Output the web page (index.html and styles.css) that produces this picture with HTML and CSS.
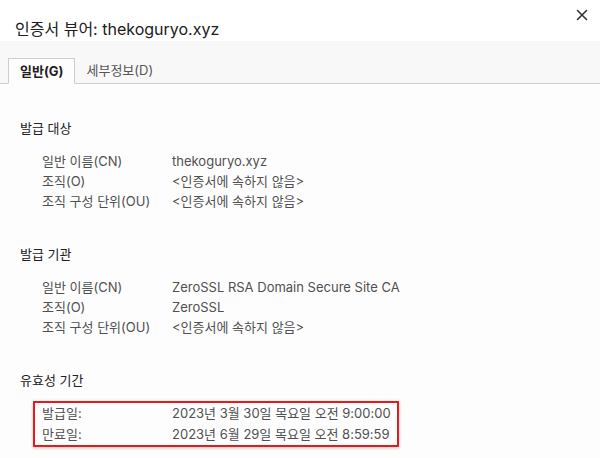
FILE: index.html
```html
<!DOCTYPE html>
<html lang="ko">
<head>
<meta charset="utf-8">
<link rel="stylesheet" href="styles.css">
</head>
<body>
<div class="dialog">
  <header class="titlebar">
    <h1 class="title">인증서 뷰어: thekoguryo.xyz</h1>
    <button class="close" aria-label="닫기">
      <svg width="12" height="12" viewBox="0 0 12 12"><path d="M1.5 1.5 L10.5 10.5 M10.5 1.5 L1.5 10.5" stroke="#333" stroke-width="1.6" stroke-linecap="round"/></svg>
    </button>
  </header>
  <nav class="tabs">
    <div class="tab active">일반(G)</div>
    <div class="tab">세부정보(D)</div>
  </nav>
  <main class="content">
    <section class="section">
      <h2 class="heading">발급 대상</h2>
      <dl class="rows">
        <dt>일반 이름(CN)</dt><dd>thekoguryo.xyz</dd>
        <dt>조직(O)</dt><dd>&lt;인증서에 속하지 않음&gt;</dd>
        <dt>조직 구성 단위(OU)</dt><dd>&lt;인증서에 속하지 않음&gt;</dd>
      </dl>
    </section>
    <section class="section">
      <h2 class="heading">발급 기관</h2>
      <dl class="rows">
        <dt>일반 이름(CN)</dt><dd>ZeroSSL RSA Domain Secure Site CA</dd>
        <dt>조직(O)</dt><dd>ZeroSSL</dd>
        <dt>조직 구성 단위(OU)</dt><dd>&lt;인증서에 속하지 않음&gt;</dd>
      </dl>
    </section>
    <section class="section">
      <h2 class="heading validity">유효성 기간</h2>
      <dl class="rows highlight">
        <dt>발급일:</dt><dd>2023년 3월 30일 목요일 오전 9:00:00</dd>
        <dt>만료일:</dt><dd>2023년 6월 29일 목요일 오전 8:59:59</dd>
      </dl>
    </section>
  </main>
</div>
</body>
</html>
```
FILE: styles.css
```css
html, body {
  margin: 0;
  padding: 0;
  background: #ffffff;
}
body {
  font-family: Inter, "Noto Sans CJK KR", sans-serif;
  color: #222;
  width: 600px;
  height: 458px;
  overflow: hidden;
}
.dialog {
  display: flex;
  flex-direction: column;
  height: 458px;
}
.titlebar {
  flex: 0 0 41px;
  display: flex;
  align-items: flex-start;
  justify-content: space-between;
  padding: 0 12px 0 15px;
  background: #fff;
  box-sizing: border-box;
}
.title {
  margin: 0;
  font-size: 16px;
  font-weight: 400;
  color: #202020;
  padding-top: 18px;
  line-height: 22px;
}
.close {
  border: 0;
  background: none;
  padding: 0;
  width: 12px;
  height: 12px;
  margin-top: 9px;
  display: flex;
}
.tabs {
  flex: 0 0 43px;
  background: #f8f8f8;
  border-bottom: 1px solid #cdcdcd;
  display: flex;
  align-items: flex-end;
  padding-left: 8px;
  box-sizing: border-box;
}
.tab {
  height: 26px;
  line-height: 25px;
  font-size: 13px;
  padding: 0 11px;
  color: #555;
  margin-bottom: -1px;
  box-sizing: border-box;
}
.tab.active {
  background: #fdfdfd;
  border: 1px solid #cdcdcd;
  border-bottom: 1px solid #fdfdfd;
  font-weight: 700;
  color: #202020;
  padding: 0 11px;
}
.content {
  flex: 1 1 auto;
  min-height: 0;
  overflow: hidden;
  background: #fdfdfd;
  padding: 26px 0 0 20px;
}
.section {
  margin-bottom: 25px;
}
.heading {
  margin: 0 0 5px 0;
  font-size: 13px;
  font-weight: 400;
  line-height: 36px;
  height: 36px;
  color: #202020;
}
.heading.validity {
  margin-bottom: 3px;
}
.rows {
  display: grid;
  grid-template-columns: 130px auto;
  grid-auto-rows: 20px;
  margin: 0 0 0 22px;
  font-size: 13px;
  line-height: 20px;
  color: #505050;
}
.rows dt, .rows dd {
  margin: 0;
}
.highlight {
  width: 355px;
  margin-left: 13px;
  padding: 0 0 0 7px;
  grid-auto-rows: 21px;
  line-height: 21px;
  border: 2px solid #e21c1c;
  box-shadow: 0 1px 3px rgba(0,0,0,0.25);
}
```
